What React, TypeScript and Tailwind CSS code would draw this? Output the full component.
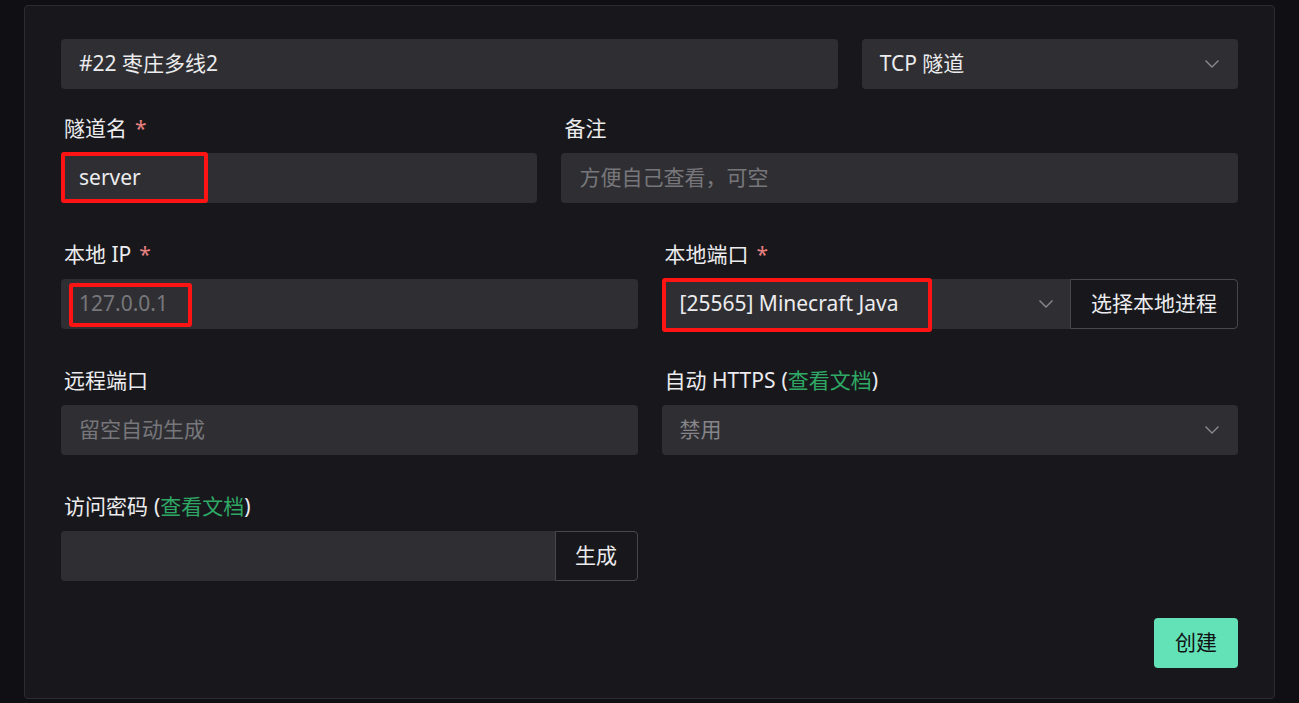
import React from 'react';

const font = { fontFamily: '"Noto Sans", "Noto Sans CJK SC", sans-serif' };

const Chevron = () => (
  <svg width="16" height="10" viewBox="0 0 16 10" className="shrink-0">
    <polyline points="1.5,1.5 8,8 14.5,1.5" fill="none" stroke="#8a8a8e" strokeWidth="1.4" />
  </svg>
);

const Label = ({ text, required, link }: { text: string; required?: boolean; link?: boolean }) => (
  <div className="h-[28px] mb-[11px] pl-[3px] flex items-center text-[21px] text-[#ececee] leading-none">
    <span>{text}</span>
    {link && (
      <span className="ml-[6px]">
        (<span className="text-[#2fa866]">查看文档</span>)
      </span>
    )}
    {required && <span className="ml-[8px] text-[#e88080]">*</span>}
  </div>
);

const RedBox = ({ className }: { className: string }) => (
  <div className={`absolute border-[4px] border-[#ff1414] rounded-[3px] pointer-events-none ${className}`} />
);

const Field = ({ value, placeholder }: { value?: string; placeholder?: string }) => (
  <div className="h-[50px] bg-[#2f2f33] rounded-[4px] px-[18px] flex items-center text-[21px]">
    {value ? <span className="text-[#ececee]">{value}</span> : <span className="text-[#77777b]">{placeholder}</span>}
  </div>
);

export default function App() {
  return (
    <div style={font} className="min-h-[703px] bg-[#101014] px-[24px] pt-[5px] pb-[4px]">
      <div className="bg-[#18181c] border border-[#2c2c30] rounded-[4px] px-[36px] pt-[33px] pb-[30px]">
        <div className="grid grid-cols-12 gap-x-[24px]">
          {/* node + tunnel type */}
          <div className="col-span-8 mb-[25px]">
            <Field value="#22 枣庄多线2" />
          </div>
          <div className="col-span-4 mb-[25px]">
            <div className="h-[50px] bg-[#2f2f33] rounded-[4px] pl-[18px] pr-[18px] flex items-center justify-between text-[21px] text-[#ececee]">
              <span>TCP 隧道</span>
              <Chevron />
            </div>
          </div>

          <div className="col-span-5 mb-[37px]">
            <Label text="隧道名" required />
            <div className="relative">
              <Field value="server" />
              <RedBox className="left-0 top-[-1px] w-[147px] h-[51px]" />
            </div>
          </div>
          <div className="col-span-7 mb-[37px]">
            <Label text="备注" />
            <Field placeholder="方便自己查看，可空" />
          </div>

          <div className="col-span-6 mb-[37px]">
            <Label text="本地 IP" required />
            <div className="relative">
              <Field placeholder="127.0.0.1" />
              <RedBox className="left-[8px] top-[4px] w-[123px] h-[44px]" />
            </div>
          </div>
          <div className="col-span-6 mb-[37px]">
            <Label text="本地端口" required />
            <div className="relative flex h-[50px]">
              <div className="flex-1 bg-[#2f2f33] rounded-l-[4px] pl-[18px] pr-[16px] flex items-center justify-between text-[21px] text-[#ececee]">
                <span>[25565] Minecraft Java</span>
                <Chevron />
              </div>
              <button className="w-[168px] border border-[#48484c] rounded-r-[4px] bg-[#18181c] text-[21px] text-[#ececee]">
                选择本地进程
              </button>
              <RedBox className="left-0 top-[-1px] w-[270px] h-[54px]" />
            </div>
          </div>

          <div className="col-span-6 mb-[37px]">
            <Label text="远程端口" />
            <Field placeholder="留空自动生成" />
          </div>
          <div className="col-span-6 mb-[37px]">
            <Label text="自动 HTTPS" link />
            <div className="h-[50px] bg-[#2f2f33] rounded-[4px] pl-[18px] pr-[18px] flex items-center justify-between text-[21px] text-[#85858a]">
              <span>禁用</span>
              <Chevron />
            </div>
          </div>

          <div className="col-span-6 mb-[37px]">
            <Label text="访问密码" link />
            <div className="flex h-[50px]">
              <div className="flex-1 bg-[#2f2f33] rounded-l-[4px]" />
              <button className="w-[83px] border border-[#48484c] rounded-r-[4px] bg-[#18181c] text-[21px] text-[#ececee]">
                生成
              </button>
            </div>
          </div>
        </div>

        <div className="flex justify-end">
          <button className="w-[84px] h-[50px] bg-[#63e2b7] rounded-[4px] text-[21px] text-[#111113]">创建</button>
        </div>
      </div>
    </div>
  );
}
